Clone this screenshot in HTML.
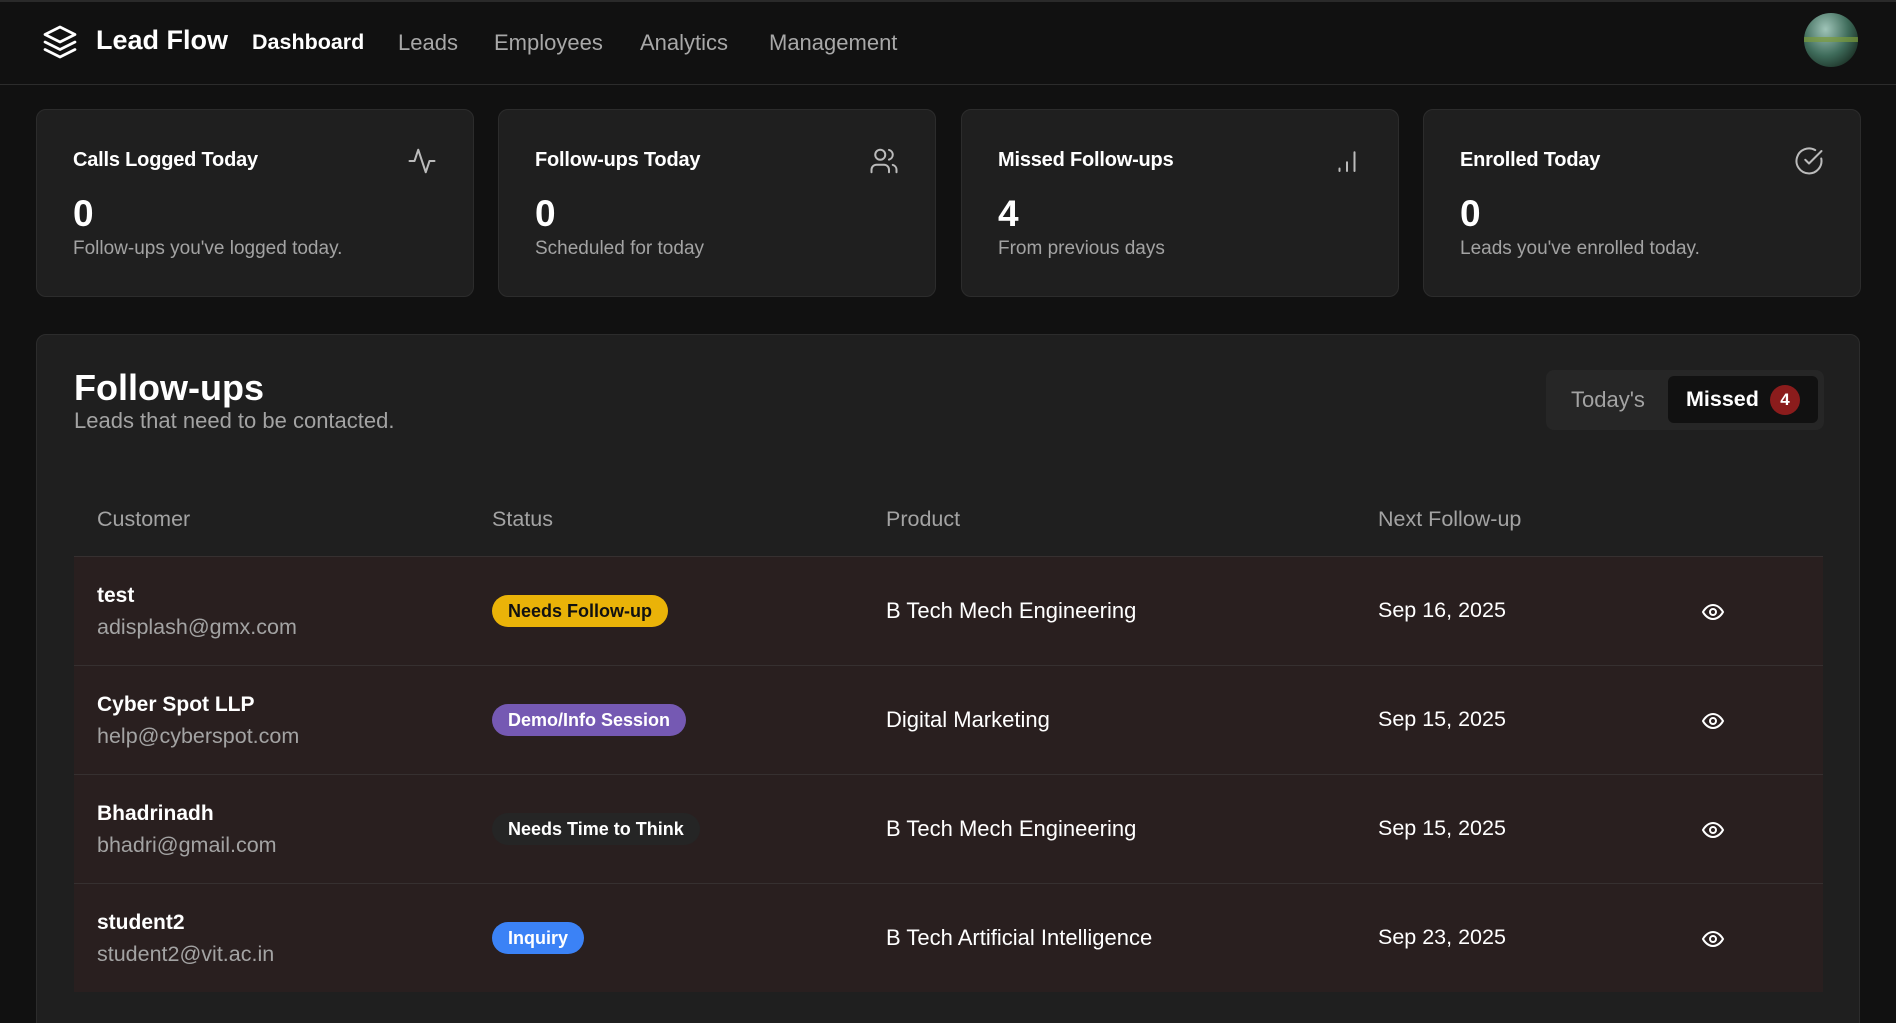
<!DOCTYPE html>
<html><head><meta charset="utf-8"><style>
*{box-sizing:border-box;margin:0;padding:0}
html,body{width:1896px;height:1023px;overflow:hidden}
body{background:#111;font-family:"Liberation Sans",sans-serif;color:#fff;position:relative}
.hdr{position:absolute;left:0;top:0;width:1896px;height:85px;border-top:2px solid #2a2a2a;border-bottom:1px solid #2c2c2c;background:#111}
.abs{position:absolute;white-space:nowrap}
.nav{font-size:22px;color:#a8a8a8;top:30px}
.card{position:absolute;top:109px;width:438px;height:188px;background:#1f1f1f;border:1px solid #2c2c2c;border-radius:10px}
.card .t{position:absolute;left:36px;top:39px;font-size:20px;font-weight:bold;color:#fff;letter-spacing:-0.2px}
.card .n{position:absolute;left:36px;top:83px;font-size:37px;font-weight:bold}
.card .s{position:absolute;left:36px;top:128px;font-size:19px;color:#a3a3a3}
.card svg{position:absolute;right:36px;top:36px}
.panel{position:absolute;left:36px;top:334px;width:1824px;height:720px;background:#1f1f1f;border:1px solid #2c2c2c;border-radius:10px}
.th{position:absolute;top:507px;font-size:21.5px;color:#a3a3a3}
.row{position:absolute;left:74px;width:1749px;height:109px;background:#291f1f;border-top:1px solid #363030}
.row .nm{position:absolute;left:23px;top:27px;font-size:21px;font-weight:bold;color:#fff}
.row .em{position:absolute;left:23px;top:58px;font-size:21.5px;color:#a3a3a3}
.row .b{position:absolute;left:418px;top:38px;height:32px;line-height:32px;padding:0 16px;border-radius:16px;font-size:18px;font-weight:bold}
.row .p{position:absolute;left:812px;top:41px;font-size:22px}
.row .d{position:absolute;left:1304px;top:41px;font-size:21.5px}
.row svg{position:absolute;left:1627px;top:43px}
</style></head><body>
<div class="hdr"></div>
<svg class="abs" style="left:42px;top:24px" width="36" height="36" viewBox="0 0 24 24" fill="none" stroke="#fff" stroke-width="1.8" stroke-linejoin="round" stroke-linecap="round"><path d="M12 2 2 7l10 5 10-5-10-5z"/><path d="m2 12 10 5 10-5"/><path d="m2 17 10 5 10-5"/></svg>
<div class="abs" style="left:96px;top:25px;font-size:27px;font-weight:bold">Lead Flow</div>
<div class="abs nav" style="left:252px;color:#fff;font-weight:bold;font-size:21.5px">Dashboard</div>
<div class="abs nav" style="left:398px">Leads</div>
<div class="abs nav" style="left:494px">Employees</div>
<div class="abs nav" style="left:640px">Analytics</div>
<div class="abs nav" style="left:769px">Management</div>
<div class="abs" style="left:1804px;top:13px;width:54px;height:54px;border-radius:50%;background:radial-gradient(ellipse at 40% 30%,#9fc4b8,#3e6b5a 50%,#1d3328 80%);overflow:hidden"><div style="position:absolute;left:0;top:24px;width:54px;height:5px;background:#7a9a3a;opacity:.7"></div></div>

<div class="card" style="left:36px"><div class="t">Calls Logged Today</div><div class="n">0</div><div class="s">Follow-ups you've logged today.</div>
<svg width="30" height="30" viewBox="0 0 24 24" fill="none" stroke="#bbb" stroke-width="1.6" stroke-linecap="round" stroke-linejoin="round"><path d="M22 12h-4l-3 9L9 3l-3 9H2"/></svg></div>
<div class="card" style="left:498px"><div class="t">Follow-ups Today</div><div class="n">0</div><div class="s">Scheduled for today</div>
<svg width="30" height="30" viewBox="0 0 24 24" fill="none" stroke="#bbb" stroke-width="1.6" stroke-linecap="round" stroke-linejoin="round"><path d="M16 21v-2a4 4 0 0 0-4-4H6a4 4 0 0 0-4 4v2"/><circle cx="9" cy="7" r="4"/><path d="M22 21v-2a4 4 0 0 0-3-3.87M16 3.13a4 4 0 0 1 0 7.75"/></svg></div>
<div class="card" style="left:961px"><div class="t">Missed Follow-ups</div><div class="n">4</div><div class="s">From previous days</div>
<svg width="30" height="30" viewBox="0 0 24 24" fill="none" stroke="#bbb" stroke-width="1.6" stroke-linecap="round"><path d="M6 20v-2M12 20v-7M18 20V5"/></svg></div>
<div class="card" style="left:1423px"><div class="t">Enrolled Today</div><div class="n">0</div><div class="s">Leads you've enrolled today.</div>
<svg width="30" height="30" viewBox="0 0 24 24" fill="none" stroke="#bbb" stroke-width="1.6" stroke-linecap="round" stroke-linejoin="round"><path d="M21.8 10A10 10 0 1 1 17 3.3"/><path d="m9 11 3 3L22 4"/></svg></div>

<div class="panel"></div>
<div class="abs" style="left:74px;top:367px;font-size:36px;font-weight:bold">Follow-ups</div>
<div class="abs" style="left:74px;top:408px;font-size:22px;color:#a3a3a3">Leads that need to be contacted.</div>
<div class="abs" style="left:1546px;top:370px;width:278px;height:60px;background:#262626;border-radius:8px"></div>
<div class="abs" style="left:1571px;top:387px;font-size:22px;color:#a3a3a3">Today's</div>
<div class="abs" style="left:1668px;top:376px;width:150px;height:47px;background:#111;border-radius:6px"></div>
<div class="abs" style="left:1686px;top:387px;font-size:21.5px;font-weight:bold">Missed</div>
<div class="abs" style="left:1770px;top:385px;width:30px;height:30px;border-radius:50%;background:#8b1c1c;text-align:center;line-height:30px;font-size:17px;font-weight:bold">4</div>

<div class="th" style="left:97px">Customer</div>
<div class="th" style="left:492px">Status</div>
<div class="th" style="left:886px">Product</div>
<div class="th" style="left:1378px">Next Follow-up</div>

<div class="row" style="top:556px"><div class="nm">test</div><div class="em">adisplash@gmx.com</div><div class="b" style="background:#eab308;color:#111">Needs Follow-up</div><div class="p">B Tech Mech Engineering</div><div class="d">Sep 16, 2025</div>
<svg width="24" height="24" viewBox="0 0 24 24" fill="none" stroke="#fff" stroke-width="2"><path d="M2 12s3.5-7 10-7 10 7 10 7-3.5 7-10 7S2 12 2 12z"/><circle cx="12" cy="12" r="3"/></svg></div>
<div class="row" style="top:665px"><div class="nm">Cyber Spot LLP</div><div class="em">help@cyberspot.com</div><div class="b" style="background:#7559b3;color:#fff">Demo/Info Session</div><div class="p">Digital Marketing</div><div class="d">Sep 15, 2025</div>
<svg width="24" height="24" viewBox="0 0 24 24" fill="none" stroke="#fff" stroke-width="2"><path d="M2 12s3.5-7 10-7 10 7 10 7-3.5 7-10 7S2 12 2 12z"/><circle cx="12" cy="12" r="3"/></svg></div>
<div class="row" style="top:774px"><div class="nm">Bhadrinadh</div><div class="em">bhadri@gmail.com</div><div class="b" style="background:#252525;color:#fff">Needs Time to Think</div><div class="p">B Tech Mech Engineering</div><div class="d">Sep 15, 2025</div>
<svg width="24" height="24" viewBox="0 0 24 24" fill="none" stroke="#fff" stroke-width="2"><path d="M2 12s3.5-7 10-7 10 7 10 7-3.5 7-10 7S2 12 2 12z"/><circle cx="12" cy="12" r="3"/></svg></div>
<div class="row" style="top:883px"><div class="nm">student2</div><div class="em">student2@vit.ac.in</div><div class="b" style="background:#3b82f6;color:#fff">Inquiry</div><div class="p">B Tech Artificial Intelligence</div><div class="d">Sep 23, 2025</div>
<svg width="24" height="24" viewBox="0 0 24 24" fill="none" stroke="#fff" stroke-width="2"><path d="M2 12s3.5-7 10-7 10 7 10 7-3.5 7-10 7S2 12 2 12z"/><circle cx="12" cy="12" r="3"/></svg></div>
</body></html>
